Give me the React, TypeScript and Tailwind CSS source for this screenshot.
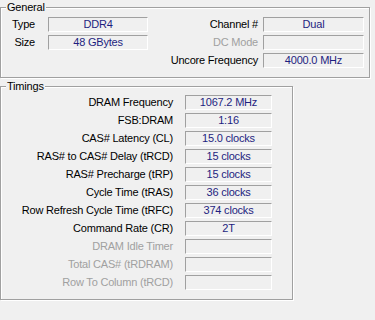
import React from "react"

// sunken read-only box, like the old win32 edit control
const Field: React.FC<{ value?: string; className?: string }> = ({ value = "", className = "" }) => (
  <div
    className={`h-[15px] border-t border-l border-t-[#a0a0a0] border-l-[#a0a0a0] border-b border-r border-b-white border-r-white bg-[#f0f0f0] text-center leading-[13px] text-[#1e1e80] ${className}`}
  >
    {value}
  </div>
)

const Group: React.FC<{ title: string; className?: string; children: React.ReactNode }> = ({ title, className = "", children }) => (
  <div className={`relative border border-[#a0a0a0] shadow-[inset_1px_1px_0_#fff,1px_1px_0_#fff] ${className}`}>
    <span className="absolute left-[5px] top-[-8px] bg-[#f0f0f0] px-[1px] leading-[14px] text-black">{title}</span>
    {children}
  </div>
)

const timings: { label: string; value: string; off?: boolean }[] = [
  { label: "DRAM Frequency", value: "1067.2 MHz" },
  { label: "FSB:DRAM", value: "1:16" },
  { label: "CAS# Latency (CL)", value: "15.0 clocks" },
  { label: "RAS# to CAS# Delay (tRCD)", value: "15 clocks" },
  { label: "RAS# Precharge (tRP)", value: "15 clocks" },
  { label: "Cycle Time (tRAS)", value: "36 clocks" },
  { label: "Row Refresh Cycle Time (tRFC)", value: "374 clocks" },
  { label: "Command Rate (CR)", value: "2T" },
  { label: "DRAM Idle Timer", value: "", off: true },
  { label: "Total CAS# (tRDRAM)", value: "", off: true },
  { label: "Row To Column (tRCD)", value: "", off: true },
]

export default function App() {
  return (
    <div
      className="w-[375px] h-[320px] overflow-hidden bg-[#f0f0f0] pt-[7px] text-[11px] tracking-[-0.2px] text-black"
      style={{ fontFamily: '"Liberation Sans", Arial, sans-serif' }}
    >
      <Group title="General" className="w-[370px] h-[71px] pt-[9px]">
        <div className="flex flex-col gap-[3px]">
          <div className="flex items-center h-[15px]">
            <span className="w-[34px] text-right">Type</span>
            <Field value="DDR4" className="ml-[13px] w-[100px]" />
            <span className="w-[110px] text-right">Channel #</span>
            <Field value="Dual" className="ml-[5px] w-[101px]" />
          </div>
          <div className="flex items-center h-[15px]">
            <span className="w-[34px] text-right">Size</span>
            <Field value="48 GBytes" className="ml-[13px] w-[100px]" />
            <span className="w-[110px] text-right text-[#a0a0a0]">DC Mode</span>
            <Field className="ml-[5px] w-[101px]" />
          </div>
          <div className="flex items-center h-[15px]">
            <span className="w-[147px]" />
            <span className="w-[110px] text-right">Uncore Frequency</span>
            <Field value="4000.0 MHz" className="ml-[5px] w-[101px]" />
          </div>
        </div>
      </Group>

      <Group title="Timings" className="mt-[8px] w-[293px] h-[214px] pt-[8px]">
        <div className="flex flex-col gap-[3px]">
          {timings.map((t) => (
            <div key={t.label} className="flex items-center h-[15px]">
              <span className={`w-[172px] text-right whitespace-nowrap ${t.off ? "text-[#a0a0a0]" : ""}`}>{t.label}</span>
              <Field value={t.value} className="ml-[12px] w-[87px]" />
            </div>
          ))}
        </div>
      </Group>
    </div>
  )
}
